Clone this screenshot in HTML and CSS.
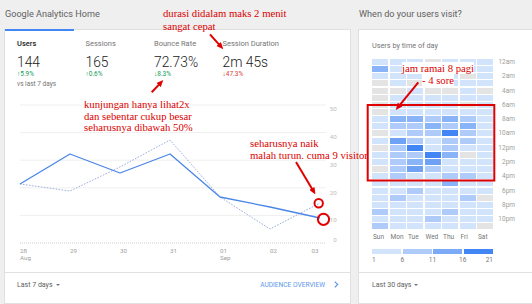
FILE: index.html
```html
<!DOCTYPE html>
<html lang="id">
<head>
  <meta charset="UTF-8">
  <title>Google Analytics Home</title>
  <link rel="stylesheet" href="styles.css">
</head>
<body>
  <div class="page">
    <div class="panel panel-left">
      <div class="panel-title">Google Analytics Home</div>
      <div class="card">
        <div class="tabs">
          <div class="tab active">
            <div class="tab-label">Users</div>
            <div class="tab-value">144</div>
            <div class="tab-change up">&#8593;5.9%</div>
            <div class="tab-note">vs last 7 days</div>
          </div>
          <div class="tab">
            <div class="tab-label">Sessions</div>
            <div class="tab-value">165</div>
            <div class="tab-change up">&#8593;0.6%</div>
          </div>
          <div class="tab">
            <div class="tab-label">Bounce Rate</div>
            <div class="tab-value">72.73%</div>
            <div class="tab-change up">&#8595;8.3%</div>
          </div>
          <div class="tab">
            <div class="tab-label">Session Duration</div>
            <div class="tab-value">2m 45s</div>
            <div class="tab-change down">&#8595;47.3%</div>
          </div>
        </div>
        <svg class="chart" width="345" height="177" viewBox="0 0 345 177">
          <g class="grid">
            <line x1="15" y1="10" x2="321" y2="10"/>
            <line x1="15" y1="37.6" x2="321" y2="37.6"/>
            <line x1="15" y1="65.2" x2="321" y2="65.2"/>
            <line x1="15" y1="92.8" x2="321" y2="92.8"/>
            <line x1="15" y1="120.4" x2="321" y2="120.4"/>
          </g>
          <line class="axis" x1="15" y1="148" x2="321" y2="148"/>
          <g class="ylab">
            <text x="331.7" y="15.5">50</text>
            <text x="331.7" y="43.5">40</text>
            <text x="331.7" y="71.5">30</text>
            <text x="331.7" y="99.5">20</text>
            <text x="331.7" y="126.5">10</text>
            <text x="331.7" y="146.7">0</text>
          </g>
          <g class="xlab">
            <text x="15" y="157.8">28</text>
            <text x="15" y="165.2">Aug</text>
            <text x="65" y="157.8">29</text>
            <text x="115" y="157.8">30</text>
            <text x="165" y="157.8">31</text>
            <text x="215" y="157.8">01</text>
            <text x="215" y="165.2">Sep</text>
            <text x="265" y="157.8">02</text>
            <text x="313.5" y="157.8" text-anchor="end">03</text>
          </g>
          <polyline class="prev" points="15,89 65,96 115,72 165,45 215,102 265,134 315,108"/>
          <polyline class="cur" points="15,89 65,59 115,78 165,59 215,102 265,112 315,123"/>
        </svg>
        <div class="card-foot">
          <span class="range">Last 7 days<i class="caret"></i></span>
          <span class="more">AUDIENCE OVERVIEW<svg class="chev" width="5" height="7" viewBox="0 0 5 7"><path d="M0.8 0.6L3.6 3.5L0.8 6.4"/></svg></span>
        </div>
      </div>
    </div>

    <div class="panel panel-right">
      <div class="panel-title">When do your users visit?</div>
      <div class="card card-time">
        <div class="card-body">
          <div class="card-sub">Users by time of day</div>
          <div class="heat">
            <div class="heat-grid" id="heat-grid"></div>
            <div class="heat-hours">
              <span>12am</span><span>2am</span><span>4am</span><span>6am</span>
              <span>8am</span><span>10am</span><span>12pm</span><span>2pm</span>
              <span>4pm</span><span>6pm</span><span>8pm</span><span>10pm</span>
            </div>
          </div>
          <div class="heat-days">
            <span>Sun</span><span>Mon</span><span>Tue</span><span>Wed</span><span>Thu</span><span>Fri</span><span>Sat</span>
          </div>
          <div class="legend">
            <i class="l1"></i><i class="l2"></i><i class="l3"></i><i class="l5"></i>
          </div>
          <div class="legend-nums">
            <span>1</span><span>6</span><span>11</span><span>16</span><span>21</span>
          </div>
        </div>
        <div class="card-foot">
          <span class="range">Last 30 days<i class="caret"></i></span>
        </div>
      </div>
    </div>

    <!-- catatan merah di atas screenshot -->
    <div class="note note-duration">durasi didalam maks 2 menit<br>sangat cepat</div>
    <div class="note note-bounce">kunjungan hanya lihat2x<br>dan sebentar cukup besar<br>seharusnya dibawah 50%</div>
    <div class="note note-visitor">seharusnya naik<br>malah turun. cuma 9 visitor</div>
    <div class="note note-peak"><span>jam ramai 8 pagi</span><br><span>- 4 sore</span></div>

    <svg class="marks" width="532" height="304" viewBox="0 0 532 304">
      <defs>
        <marker id="head" markerWidth="7" markerHeight="6" refX="2" refY="3" orient="auto" markerUnits="userSpaceOnUse">
          <path d="M0,0 L7,3 L0,6 z" fill="#e00000"/>
        </marker>
      </defs>
      <line x1="210" y1="34.3" x2="220" y2="45.6" marker-end="url(#head)"/>
      <line x1="151.7" y1="92.3" x2="159.9" y2="83.6" marker-end="url(#head)"/>
      <line x1="296" y1="162" x2="312.9" y2="190.2" marker-end="url(#head)"/>
      <line x1="418.3" y1="82.3" x2="398.9" y2="106.1" marker-end="url(#head)"/>
      <rect x="367.7" y="105" width="126.6" height="75.5"/>
      <circle cx="318.7" cy="203.3" r="4.2"/>
      <circle cx="323.5" cy="219.3" r="5.6"/>
    </svg>
  </div>

  <script>
    (function() {
      // users per jam: baris = jam 0..23, kolom = Sun..Sat, angka = level warna
      var rows = [
        '1110111', '3111111', '1110101', '0100111', '0010010', '0111111',
        '0111101', '0111111', '1332321', '1223231', '0122521', '1421221',
        '0251211', '1225301', '1234111', '0242111', '1211221', '1111311',
        '1121111', '1211120', '1111111', '2111211', '1112111', '2111110'
      ],
        grid = document.getElementById('heat-grid');

      rows.forEach(function(row) {
        for (var i = 0; i < row.length; i++) {
          var cell = document.createElement('i');
          cell.className = 'l' + row[i];
          grid.appendChild(cell);
        }
      });
    })();
  </script>
</body>
</html>
```

FILE: styles.css
```css
* {
  margin: 0;
  padding: 0;
  box-sizing: border-box;
}
body {
  font-family: Roboto, "Liberation Sans", sans-serif;
  background: #efefef;
  color: #212121;
}
.page {
  position: relative;
  display: flex;
  width: 532px;
  height: 304px;
  overflow: hidden;
}
.panel-left {
  width: 351px;
  padding-left: 4px;
}
.panel-right {
  flex: 1;
  padding-left: 7px;
}
.panel-title {
  height: 29px;
  line-height: 29px;
  padding-left: 1px;
  font-size: 9.1px;
  color: #616161;
}
.card {
  height: 275px;
  background: #fff;
  border: 1px solid #e0e0e0;
}

/* metric tabs */
.tabs {
  display: flex;
  margin-top: -1px;
}
.tab {
  width: 68.5px;
  height: 66px;
  padding: 8px 0 0 12px;
  border-top: 2px solid transparent;
}
.tab.active {
  border-top-color: #4285f4;
}
.tab-label {
  font-size: 7.5px;
  line-height: 10px;
  color: #757575;
  white-space: nowrap;
}
.tab.active .tab-label {
  color: #212121;
  font-weight: 500;
}
.tab-value {
  margin-top: 5px;
  font-size: 13.8px;
  font-weight: 300;
  line-height: 16px;
  white-space: nowrap;
}
.tab-change {
  font-size: 6.5px;
  line-height: 9px;
}
.tab-change.up {
  color: #0f9d58;
}
.tab-change.down {
  color: #db4437;
}
.tab-note {
  margin-top: 1px;
  font-size: 6.5px;
  line-height: 9px;
  color: #757575;
}

/* line chart */
.chart {
  display: block;
}
.chart .grid line {
  stroke: #efefef;
  stroke-width: 1;
}
.chart .axis {
  stroke: #cfcfcf;
  stroke-width: 1;
  stroke-dasharray: 1 1;
}
.chart text {
  font-family: Roboto, "Liberation Sans", sans-serif;
  font-size: 6.2px;
  fill: #9e9e9e;
}
.chart .ylab text {
  text-anchor: end;
  fill: #bdbdbd;
}
.chart polyline {
  fill: none;
  stroke-linejoin: round;
}
.chart .cur {
  stroke: #4a86e8;
  stroke-width: 1.3;
}
.chart .prev {
  stroke: #9bb0dc;
  stroke-width: 1;
  stroke-dasharray: 1.6 1.4;
}

.card-foot {
  display: flex;
  align-items: center;
  justify-content: space-between;
  height: 24px;
  padding: 0 11px 0 12px;
  border-top: 1px solid #e0e0e0;
  font-size: 7px;
  color: #616161;
}
.caret {
  display: inline-block;
  margin-left: 3px;
  vertical-align: middle;
  border-left: 2.2px solid transparent;
  border-right: 2.2px solid transparent;
  border-top: 2.6px solid #757575;
}
.more {
  display: flex;
  align-items: center;
  font-size: 6.6px;
  color: #5e97e8;
}
.chev {
  margin-left: 9px;
}
.chev path {
  fill: none;
  stroke: #5e97e8;
  stroke-width: 1.2;
}

/* time of day card */
.card-time {
  width: calc(100% + 4px);
  border-right: none;
}
.card-body {
  height: 242px;
  padding-left: 13px;
}
.card-time .card-foot {
  padding-left: 13px;
}
.card-sub {
  padding-top: 11px;
  font-size: 7.3px;
  line-height: 10px;
  color: #757575;
}
.heat {
  display: flex;
  margin-top: 8px;
}
.heat-grid,
.heat-hours {
  display: grid;
  grid-auto-rows: 6px;
  row-gap: 1.15px;
}
.heat-grid {
  grid-template-columns: repeat(7, 16px);
  column-gap: 1.5px;
}
.heat-hours {
  width: 22px;
  text-align: right;
  font-size: 6.5px;
  line-height: 6px;
  color: #9e9e9e;
}
.heat-hours span {
  grid-row: span 2;
}
.l0 { background: #e4e4e4; }
.l1 { background: #d2e3fc; }
.l2 { background: #aecbfa; }
.l3 { background: #8ab4f8; }
.l4 { background: #6fa1f5; }
.l5 { background: #4285f4; }

.heat-days {
  display: grid;
  grid-template-columns: repeat(7, 16px);
  column-gap: 1.5px;
  margin-top: 3px;
  font-size: 6.5px;
  line-height: 10px;
  color: #757575;
}
.heat-days span {
  padding-left: 1px;
}
.legend {
  display: flex;
  gap: 1.5px;
  width: 121px;
  height: 4.5px;
  margin-top: 7px;
}
.legend i {
  flex: 1;
}
.legend .l3 {
  background: #7baaf7;
}
.legend-nums {
  display: flex;
  justify-content: space-between;
  width: 121px;
  margin-top: 2px;
  font-size: 6.5px;
  line-height: 8px;
  color: #757575;
}
.legend-nums span {
  display: flex;
  justify-content: center;
  width: 0;
  white-space: nowrap;
}
.legend-nums span:first-child {
  justify-content: flex-start;
}
.legend-nums span:last-child {
  justify-content: flex-end;
}

/* red notes drawn over the screenshot */
.note {
  position: absolute;
  font-family: "Liberation Serif", "Times New Roman", serif;
  font-size: 10.7px;
  line-height: 12px;
  color: #dc0000;
  white-space: nowrap;
}
.note-duration {
  left: 163px;
  top: 7px;
  line-height: 13px;
}
.note-bounce {
  left: 84px;
  top: 99px;
  line-height: 11.6px;
}
.note-visitor {
  left: 250px;
  top: 137px;
}
.note-peak {
  left: 398px;
  top: 62px;
  width: 80px;
  text-align: center;
}
.note-peak span {
  background: #fff;
}
.marks {
  position: absolute;
  top: 0;
  left: 0;
  pointer-events: none;
}
.marks line {
  stroke: #e00000;
  stroke-width: 2;
}
.marks rect,
.marks circle {
  fill: none;
  stroke: #e00000;
  stroke-width: 2;
}
```
